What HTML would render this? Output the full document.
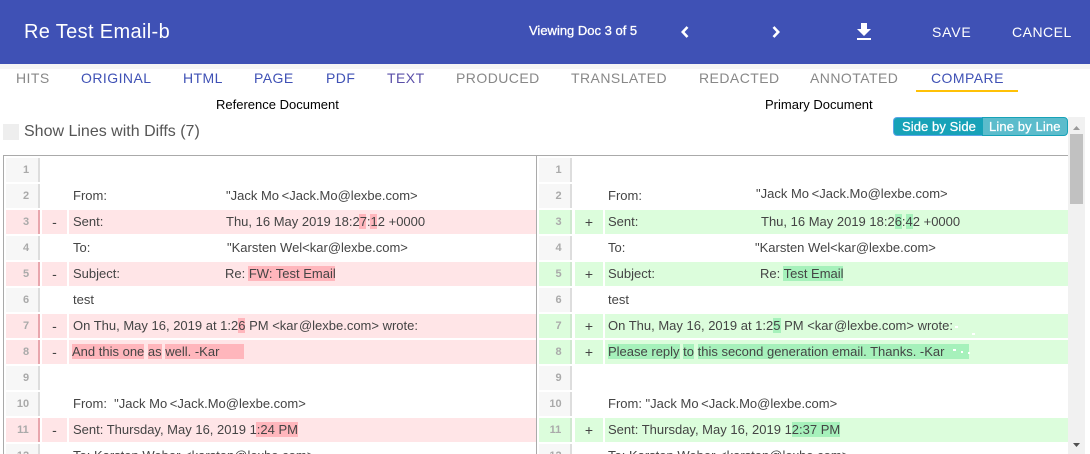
<!DOCTYPE html>
<html><head><meta charset="utf-8"><style>
html,body{margin:0;padding:0;width:1090px;height:454px;overflow:hidden;background:#fff;font-family:"Liberation Sans",sans-serif}
div,span{position:absolute;white-space:pre;box-sizing:border-box}
.hd{left:0;top:0;width:1090px;height:64px;background:#3f51b5}
.tab{top:69px;line-height:18px;font-size:14px;letter-spacing:.45px;color:#888}
.tb{color:#3f51b5}
.t{font-size:13px;line-height:24px;color:#444}
.n{width:33px;height:24px;background:#f7f7f7;border-right:2px solid #ddd;color:#aaa;font-size:11px;font-weight:bold;line-height:24px;text-align:center;padding-left:8px}
.n[style*="left:6px"]{width:34px}
.d{padding-left:2px}
.g{width:25px;height:24px;text-align:center;color:#444;font-size:14px;line-height:24px}
.p{background:#ffe5e7}.q{background:#dcfddc}
.np{background:#ffe5e7;border-right-color:#e8a6ad}
.nq{background:#dcfddc;border-right-color:#cfe8cf}
.hp{background:#ffb6bc;height:15px}
.hq{background:#a6f1bb;height:15px}
.w{background:#fff;height:2px}
</style></head><body>
<div class="hd"></div>
<div style="left:24px;top:18px;font-size:20px;line-height:28px;color:#fff;letter-spacing:.35px">Re Test Email-b</div>
<div style="left:529px;top:22px;font-size:13px;line-height:18px;color:#fff;-webkit-text-stroke:.3px #fff">Viewing Doc 3 of 5</div>
<svg style="position:absolute;left:678px;top:24px" width="14" height="16" viewBox="0 0 14 16"><polyline points="9.5,3 4.8,8 9.5,13" fill="none" stroke="#fff" stroke-width="2.6"/></svg>
<svg style="position:absolute;left:769px;top:24px" width="14" height="16" viewBox="0 0 14 16"><polyline points="4.5,3 9.2,8 4.5,13" fill="none" stroke="#fff" stroke-width="2.6"/></svg>
<svg style="position:absolute;left:852px;top:20px" width="24" height="24" viewBox="0 0 24 24"><path fill="#fff" d="M19 9h-4V3H9v6H5l7 7 7-7zM5 18v2h14v-2H5z"/></svg>
<div style="left:932px;top:23px;font-size:14px;line-height:18px;color:#fff;letter-spacing:.8px">SAVE</div>
<div style="left:1012px;top:23px;font-size:14px;line-height:18px;color:#fff;letter-spacing:.5px">CANCEL</div>
<div style="left:0;top:64px;width:1090px;height:5px;background:#f5f5f5"></div>

<div class="tab" style="left:16px">HITS</div>
<div class="tab tb" style="left:81px">ORIGINAL</div>
<div class="tab tb" style="left:183px">HTML</div>
<div class="tab tb" style="left:254px">PAGE</div>
<div class="tab tb" style="left:326px">PDF</div>
<div class="tab" style="left:387px;color:#5a4fa8">TEXT</div>
<div class="tab" style="left:456px">PRODUCED</div>
<div class="tab" style="left:571px">TRANSLATED</div>
<div class="tab" style="left:699px">REDACTED</div>
<div class="tab" style="left:810px">ANNOTATED</div>
<div class="tab tb" style="left:931px">COMPARE</div>
<div style="left:916px;top:90px;width:102px;height:2px;background:#ffc107"></div>

<div style="left:216px;top:96px;font-size:13px;line-height:18px;color:#000">Reference Document</div>
<div style="left:765px;top:96px;font-size:13px;line-height:18px;color:#000">Primary Document</div>

<div style="left:3px;top:124px;width:16px;height:16px;background:#eee"></div>
<div style="left:24px;top:121px;font-size:16px;line-height:21px;color:#555">Show Lines with Diffs (7)</div>

<div style="left:893px;top:117px;width:90px;height:19px;background:#17a2b8;border:1px solid #5aa5e8;border-right:0;border-radius:4px 0 0 4px;color:#fff;font-size:13px;line-height:17px;-webkit-text-stroke:.25px #fff;padding-left:8px;letter-spacing:.08px">Side by Side</div>
<div style="left:982px;top:117px;width:86px;height:19px;background:#5cbccc;border:1px solid #17a2b8;border-radius:0 4px 4px 0;color:#fff;font-size:13px;line-height:17px;-webkit-text-stroke:.25px #fff;padding-left:6px;letter-spacing:.12px">Line by Line</div>

<div style="left:1068px;top:117px;width:17px;height:337px;background:#f1f1f1"></div>
<div style="left:1070px;top:134px;width:13px;height:70px;background:#c1c1c1"></div>
<svg style="position:absolute;left:1068px;top:122px" width="17" height="10"><polygon points="5,8 12,8 8.5,4" fill="#999"/></svg>
<svg style="position:absolute;left:1068px;top:440px" width="17" height="10"><polygon points="5,3 12,3 8.5,7" fill="#505050"/></svg>

<div style="left:3px;top:155px;width:1065px;height:1px;background:#aaa"></div>
<div style="left:3px;top:155px;width:1px;height:299px;background:#aaa"></div>
<div style="left:536px;top:155px;width:1px;height:299px;background:#aaa"></div>

<!-- row backgrounds left -->
<div class="p" style="left:69px;top:210px;width:467px;height:24px"></div>
<div class="p" style="left:69px;top:262px;width:467px;height:24px"></div>
<div class="p" style="left:69px;top:314px;width:467px;height:24px"></div>
<div class="p" style="left:69px;top:340px;width:467px;height:24px"></div>
<div class="p" style="left:69px;top:418px;width:467px;height:24px"></div>
<!-- row backgrounds right -->
<div class="q" style="left:605px;top:210px;width:463px;height:24px"></div>
<div class="q" style="left:605px;top:262px;width:463px;height:24px"></div>
<div class="q" style="left:605px;top:314px;width:463px;height:24px"></div>
<div class="q" style="left:605px;top:340px;width:463px;height:24px"></div>
<div class="q" style="left:605px;top:418px;width:463px;height:24px"></div>

<!-- gutters left -->
<div class="n" style="left:6px;top:158px">1</div>
<div class="n" style="left:6px;top:184px">2</div>
<div class="n np" style="left:6px;top:210px">3</div><div class="g p" style="left:42px;top:210px">-</div>
<div class="n" style="left:6px;top:236px">4</div>
<div class="n np" style="left:6px;top:262px">5</div><div class="g p" style="left:42px;top:262px">-</div>
<div class="n" style="left:6px;top:288px">6</div>
<div class="n np" style="left:6px;top:314px">7</div><div class="g p" style="left:42px;top:314px">-</div>
<div class="n np" style="left:6px;top:340px">8</div><div class="g p" style="left:42px;top:340px">-</div>
<div class="n" style="left:6px;top:366px">9</div>
<div class="n d" style="left:6px;top:392px">10</div>
<div class="n np d" style="left:6px;top:418px">11</div><div class="g p" style="left:42px;top:418px">-</div>
<div class="n d" style="left:6px;top:444px;height:10px;overflow:hidden">12</div>

<!-- gutters right -->
<div class="n" style="left:539px;top:158px">1</div>
<div class="n" style="left:539px;top:184px">2</div>
<div class="n nq" style="left:539px;top:210px">3</div><div class="g q" style="left:575px;top:210px;width:28px">+</div>
<div class="n" style="left:539px;top:236px">4</div>
<div class="n nq" style="left:539px;top:262px">5</div><div class="g q" style="left:575px;top:262px;width:28px">+</div>
<div class="n" style="left:539px;top:288px">6</div>
<div class="n nq" style="left:539px;top:314px">7</div><div class="g q" style="left:575px;top:314px;width:28px">+</div>
<div class="n nq" style="left:539px;top:340px">8</div><div class="g q" style="left:575px;top:340px;width:28px">+</div>
<div class="n" style="left:539px;top:366px">9</div>
<div class="n d" style="left:539px;top:392px">10</div>
<div class="n nq d" style="left:539px;top:418px">11</div><div class="g q" style="left:575px;top:418px;width:28px">+</div>
<div class="n d" style="left:539px;top:444px;height:10px;overflow:hidden">12</div>

<!-- highlights left -->
<div class="hp" style="left:359px;top:214px;width:7px"></div>
<div class="hp" style="left:370px;top:214px;width:7px"></div>
<div class="hp" style="left:248px;top:266px;width:87px"></div>
<div class="hp" style="left:238px;top:318px;width:7px"></div>
<div class="hp" style="left:72px;top:344px;width:72px"></div>
<div class="hp" style="left:148px;top:344px;width:14px"></div>
<div class="hp" style="left:165px;top:344px;width:79px"></div>
<div class="hp" style="left:256px;top:422px;width:42px"></div>
<!-- highlights right -->
<div class="hq" style="left:895px;top:214px;width:7px"></div>
<div class="hq" style="left:906px;top:214px;width:7px"></div>
<div class="hq" style="left:783px;top:266px;width:60px"></div>
<div class="hq" style="left:773px;top:318px;width:8px"></div>
<div class="hq" style="left:608px;top:344px;width:72px"></div>
<div class="hq" style="left:683px;top:344px;width:11px"></div>
<div class="hq" style="left:698px;top:344px;width:271px"></div>
<div class="hq" style="left:792px;top:422px;width:48px"></div>
<div class="w" style="left:953px;top:349px;width:3px"></div>
<div class="w" style="left:961px;top:351px;width:2px"></div>
<div class="w" style="left:968px;top:352px;width:2px"></div>
<div class="w" style="left:955px;top:326px;width:3px"></div>
<div class="w" style="left:972px;top:333px;width:3px"></div>

<!-- text left -->
<div class="t" style="left:73px;top:184px">From:</div>
<div class="t" style="left:226px;top:184px">"Jack Mo&#8201;&lt;Jack.Mo@lexbe.com&gt;</div>
<div class="t" style="left:73px;top:210px">Sent:</div>
<div class="t" style="left:226px;top:210px">Thu, 16 May 2019 18:27:12 +0000</div>
<div class="t" style="left:73px;top:236px">To:</div>
<div class="t" style="left:227px;top:236px">"Karsten Wel&lt;kar@lexbe.com&gt;</div>
<div class="t" style="left:73px;top:262px">Subject:</div>
<div class="t" style="left:225px;top:262px">Re: FW: Test Email</div>
<div class="t" style="left:73px;top:288px">test</div>
<div class="t" style="left:73px;top:314px">On Thu, May 16, 2019 at 1:26 PM &lt;kar&#8202;@lexbe.com&gt; wrote:</div>
<div class="t" style="left:72px;top:340px">And this one as well. -Kar</div>
<div class="t" style="left:73px;top:392px">From:  "Jack Mo&#8201;&lt;Jack.Mo@lexbe.com&gt;</div>
<div class="t" style="left:73px;top:418px">Sent: Thursday, May 16, 2019 1:24 PM</div>
<div class="t" style="left:73px;top:444px;height:10px;overflow:hidden">To: Karsten Weber &lt;karsten@lexbe.com&gt;</div>

<!-- text right -->
<div class="t" style="left:608px;top:184px">From:</div>
<div class="t" style="left:756px;top:182px">"Jack Mo&#8201;&lt;Jack.Mo@lexbe.com&gt;</div>
<div class="t" style="left:608px;top:210px">Sent:</div>
<div class="t" style="left:761px;top:210px">Thu, 16 May 2019 18:26:42 +0000</div>
<div class="t" style="left:608px;top:236px">To:</div>
<div class="t" style="left:755px;top:236px">"Karsten Wel&lt;kar@lexbe.com&gt;</div>
<div class="t" style="left:608px;top:262px">Subject:</div>
<div class="t" style="left:760px;top:262px">Re: Test Email</div>
<div class="t" style="left:608px;top:288px">test</div>
<div class="t" style="left:608px;top:314px">On Thu, May 16, 2019 at 1:25 PM &lt;kar&#8202;@lexbe.com&gt; wrote:</div>
<div class="t" style="left:608px;top:340px">Please reply to this second generation email. Thanks. -Kar</div>
<div class="t" style="left:608px;top:392px">From: "Jack Mo&#8201;&lt;Jack.Mo@lexbe.com&gt;</div>
<div class="t" style="left:608px;top:418px">Sent: Thursday, May 16, 2019 12:37 PM</div>
<div class="t" style="left:608px;top:444px;height:10px;overflow:hidden">To: Karsten Weber &lt;karsten@lexbe.com&gt;</div>
</body></html>
